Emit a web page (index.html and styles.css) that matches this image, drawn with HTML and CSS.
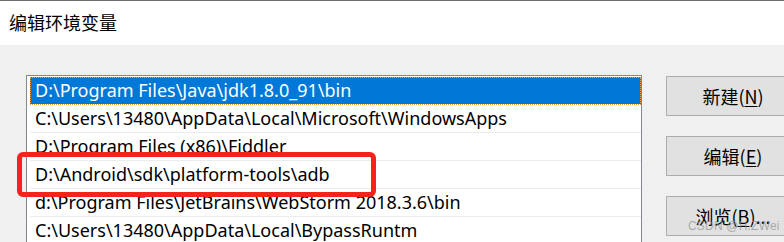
FILE: index.html
```html
<!DOCTYPE html>
<html lang="zh">
<head>
<meta charset="utf-8">
<title>编辑环境变量</title>
<link rel="stylesheet" href="styles.css">
</head>
<body>
<div class="dialog">
  <div class="titlebar">编辑环境变量</div>
  <div class="content">
    <div class="list">
      <div class="row selected">D:\Program Files\Java\jdk1.8.0_91\bin</div>
      <div class="row">C:\Users\13480\AppData\Local\Microsoft\WindowsApps</div>
      <div class="row">D:\Program Files (x86)\Fiddler</div>
      <div class="row">D:\Android\sdk\platform-tools\adb</div>
      <div class="row">d:\Program Files\JetBrains\WebStorm 2018.3.6\bin</div>
      <div class="row">C:\Users\13480\AppData\Local\BypassRuntm</div>
    </div>
    <div class="buttons">
      <button class="btn">新建(<u>N</u>)</button>
      <button class="btn">编辑(<u>E</u>)</button>
      <button class="btn">浏览(<u>B</u>)...</button>
    </div>
  </div>
  <div class="highlight"></div>
  <div class="watermark">CSDN @H.ZWei</div>
</div>
</body>
</html>
```

FILE: styles.css
```css
html, body {
  margin: 0;
  padding: 0;
}
body {
  width: 784px;
  height: 242px;
  overflow: hidden;
  background: #f0f0f0;
  font-family: "Noto Sans CJK SC", "Noto Sans", sans-serif;
  color: #000;
}
.dialog {
  position: relative;
  height: 242px;
  overflow: hidden;
}
.titlebar {
  border-top: 1px solid #6e6e6e;
  height: 44px;
  line-height: 42px;
  background: #fff;
  padding-left: 9px;
  font-size: 18px;
}
.content {
  display: flex;
  align-items: flex-start;
  padding: 30px 0 0 26px;
}
.list {
  width: 611px;
  height: 200px;
  background: #fff;
  border: 1px solid #828790;
  border-bottom: none;
  padding: 1px 0 0 3px;
  flex: none;
}
.row {
  height: 27px;
  line-height: 27px;
  border-bottom: 1px solid #ececec;
  padding-left: 5px;
  font-family: "Noto Sans", "Noto Sans CJK SC", sans-serif;
  font-size: 18px;
  white-space: nowrap;
  overflow: hidden;
}
.row.selected {
  background: #0078d7;
  color: #fff;
  outline: 1px dotted #f29a3a;
  outline-offset: -1px;
  border-bottom-color: #fff;
}
.buttons {
  display: flex;
  flex-direction: column;
  gap: 20px;
  margin-left: 24px;
  padding-top: 1px;
  flex: none;
}
.btn {
  width: 134px;
  height: 40px;
  background: #e1e1e1;
  border: 1px solid #adadad;
  border-radius: 0;
  font-family: inherit;
  font-size: 18px;
  color: #000;
  padding: 0;
}
.btn u {
  text-underline-offset: 2px;
}
.highlight {
  position: absolute;
  left: 17px;
  top: 152px;
  width: 349px;
  height: 35px;
  border: 5px solid #f5231b;
  border-radius: 6px;
}
.watermark {
  position: absolute;
  left: 688px;
  top: 219px;
  font-family: "Liberation Sans", Arial, sans-serif;
  font-size: 12px;
  color: rgba(150, 150, 150, 0.75);
  letter-spacing: 0.2px;
}
```
